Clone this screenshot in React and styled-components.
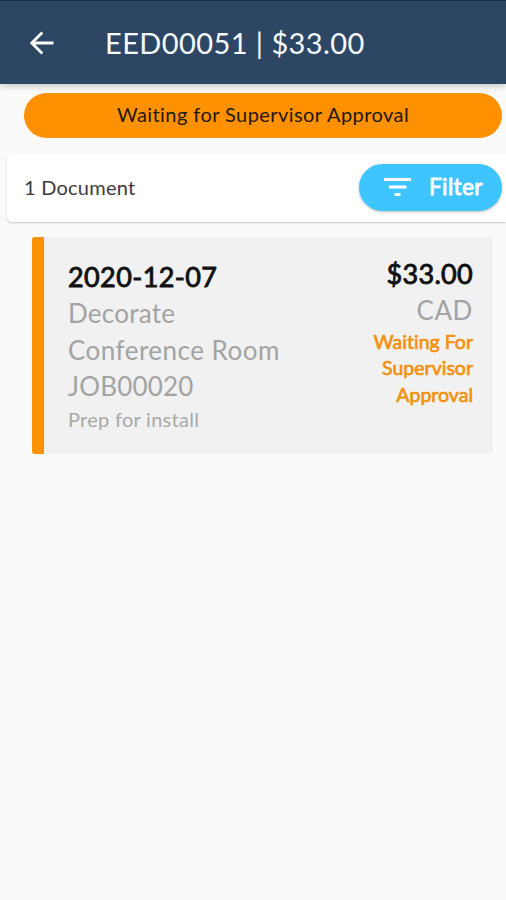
import styled, { createGlobalStyle } from "styled-components";

const GlobalStyle = createGlobalStyle`
  * {
    box-sizing: border-box;
  }
  body {
    margin: 0;
    background-color: #fafafa;
    font-family: Lato, "Noto Sans", sans-serif;
    font-variant-ligatures: none;
    overflow: hidden;
  }
`;

const Screen = styled.div`
  display: flex;
  flex-direction: column;
  height: 900px;
  background-color: #fafafa;
`;

const AppBar = styled.header`
  display: flex;
  align-items: center;
  height: 84px;
  padding-left: 29px;
  border-top: 1px solid #152f4d;
  background-color: #2d4664;
  box-shadow: 0 2px 7px rgba(0, 0, 0, 0.22);
`;

const BackButton = styled.button`
  display: flex;
  width: 26px;
  margin-right: 50px;
  padding: 0;
  border: 0;
  background: none;
`;

const Line = styled.div`
  margin: 0;
  font-size: ${(p) => p.$size}px;
  line-height: ${(p) => p.$height}px;
  font-weight: 400;
  letter-spacing: ${(p) => p.$spacing || 0}px;
  color: ${(p) => p.$color};
  white-space: nowrap;
  -webkit-text-stroke: ${(p) => p.$stroke || 0}px ${(p) => p.$color};
`;

const StatusBanner = styled.div`
  display: flex;
  justify-content: center;
  align-items: center;
  height: 45px;
  margin: 9px 4px 0 24px;
  padding: 0 0 3px;
  border-radius: 23px;
  background-color: #ff9100;
`;

const Toolbar = styled.div`
  display: flex;
  justify-content: space-between;
  align-items: center;
  height: 68px;
  margin: 16px 0 0 7px;
  padding: 0 4px 2px 17px;
  border-radius: 5px 0 0 5px;
  background-color: #fff;
  box-shadow: 0 1px 2px rgba(0, 0, 0, 0.2);
`;

const FilterButton = styled.button`
  display: flex;
  align-items: center;
  gap: 18px;
  width: 143px;
  height: 47px;
  padding: 0 0 0 25px;
  border: 0;
  border-radius: 24px;
  background-color: #3ec4ff;
  box-shadow: 0 1px 3px rgba(0, 0, 0, 0.25);
  font-family: inherit;
`;

const Card = styled.article`
  display: flex;
  justify-content: space-between;
  height: 217px;
  margin: 15px 13px 0 32px;
  padding: 0 20px 0 24px;
  border-left: 12px solid #ff9100;
  border-radius: 3px 0 0 3px;
  background-color: #f1f1f1;
`;

const Details = styled.div`
  padding-top: 22px;
`;

const Amount = styled.div`
  display: flex;
  flex-direction: column;
  align-items: flex-end;
  padding-top: 19px;
`;

function App() {
  return (
    <>
      <GlobalStyle />
      <Screen>
        <AppBar>
          <BackButton aria-label="Back">
            <svg width="26" height="26" viewBox="0 0 26 26" fill="none">
              <path
                d="M13.300 2.500 2.800 13l10.500 10.500M3 13h21.500"
                stroke="#fff"
                strokeWidth="2.8"
              />
            </svg>
          </BackButton>
          <Line as="h1" $size={29} $height={36} $spacing={0.42} $color="#f5fbff">
            EED00051 | $33.00
          </Line>
        </AppBar>

        <StatusBanner>
          <Line $size={20} $height={24} $spacing={0.43} $color="#24180a">
            Waiting for Supervisor Approval
          </Line>
        </StatusBanner>

        <Toolbar>
          <Line $size={20} $height={24} $spacing={0.23} $color="#3b3b3b">
            1 Document
          </Line>
          <FilterButton>
            <svg width="27" height="20" viewBox="0 0 27 20" fill="#fff">
              <path d="M0 1h27v3H0zM5 8.500h17.500v3H5zM10.500 16h6v3h-6z" />
            </svg>
            <Line as="span" $size={22.500} $height={28} $spacing={0.4} $stroke={0.9} $color="#fff">
              Filter
            </Line>
          </FilterButton>
        </Toolbar>

        <Card>
          <Details>
            <Line $size={27} $height={36} $spacing={0.4} $stroke={0.9} $color="#111">
              2020-12-07
            </Line>
            <Line $size={26} $height={36.500} $spacing={0.25} $color="#a3a3a3">
              Decorate
            </Line>
            <Line $size={26} $height={36.500} $spacing={0.48} $color="#a3a3a3">
              Conference Room
            </Line>
            <Line $size={26} $height={36.500} $spacing={0.2} $color="#a3a3a3">
              JOB00020
            </Line>
            <Line $size={20} $height={28} $spacing={0.28} $color="#a8a8a8">
              Prep for install
            </Line>
          </Details>
          <Amount>
            <Line $size={27} $height={36} $spacing={0.3} $stroke={0.9} $color="#111">
              $33.00
            </Line>
            <Line $size={26} $height={37} $spacing={0.6} $color="#a3a3a3">
              CAD
            </Line>
            <Line $size={19.500} $height={26.300} $stroke={0.7} $color="#f39210">
              Waiting For
            </Line>
            <Line $size={19.500} $height={26.300} $stroke={0.7} $color="#f39210">
              Supervisor
            </Line>
            <Line $size={19.500} $height={26.300} $stroke={0.7} $color="#f39210">
              Approval
            </Line>
          </Amount>
        </Card>
      </Screen>
    </>
  );
}

export default App;
